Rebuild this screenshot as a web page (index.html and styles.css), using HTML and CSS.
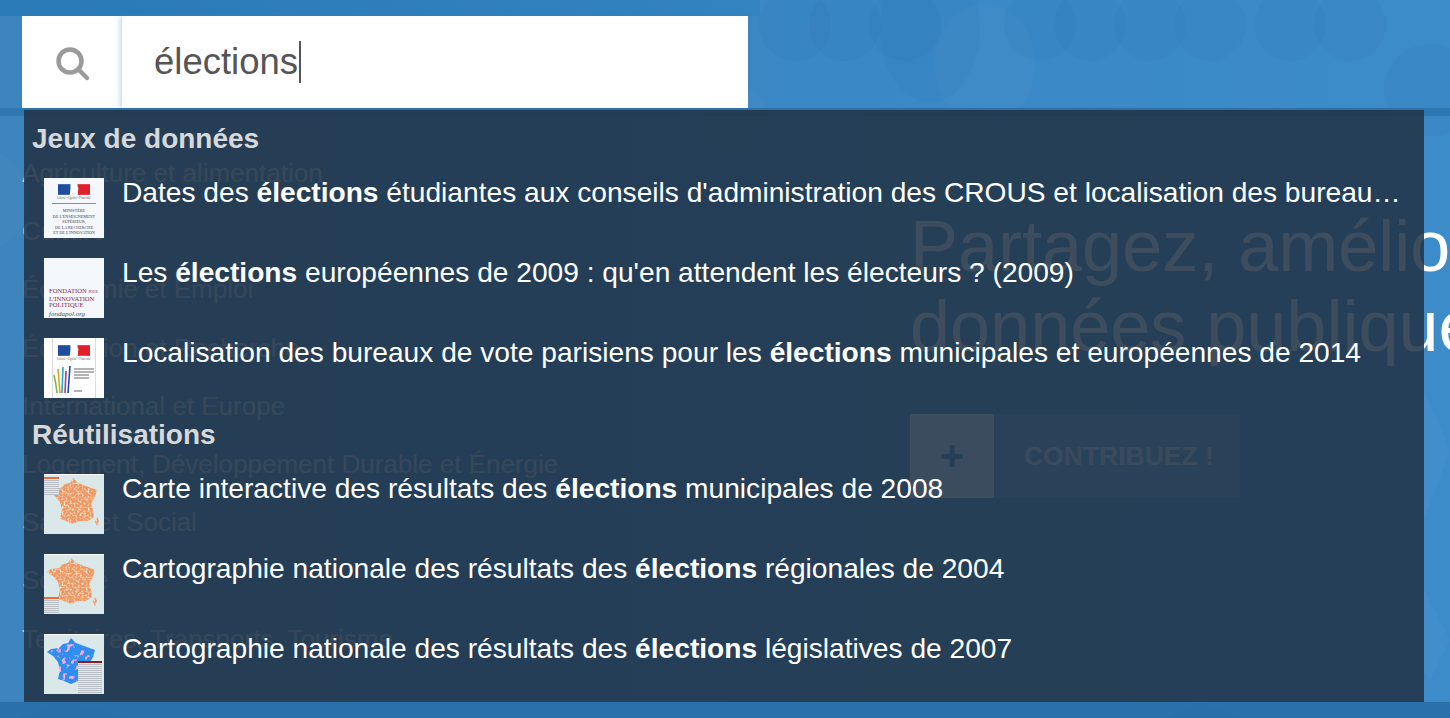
FILE: index.html
```html
<!DOCTYPE html>
<html lang="fr">
<head>
    <meta charset="UTF-8">
    <title>Recherche - élections</title>
    <link rel="stylesheet" href="styles.css">
</head>
<body>
    <!-- page background pattern -->
    <svg class="pattern" width="1450" height="718" viewBox="0 0 1450 718" aria-hidden="true">
        <g fill="#1f5f96" fill-opacity="0.07">
            <circle cx="795" cy="25" r="36"/>
            <circle cx="845" cy="25" r="36"/>
            <circle cx="905" cy="25" r="36"/>
            <ellipse cx="930" cy="30" rx="50" ry="72"/>
            <circle cx="1040" cy="25" r="36"/>
            <circle cx="1090" cy="25" r="36"/>
            <circle cx="1150" cy="25" r="36"/>
            <circle cx="1210" cy="25" r="36"/>
            <circle cx="1290" cy="25" r="36"/>
            <circle cx="1350" cy="25" r="36"/>
            <circle cx="1430" cy="90" r="46"/>
            <path d="M1200 702 L1240 718 H1170 Z"/>
            <path d="M60 702 L130 718 H20 Z"/>
        </g>
        <g fill="#fff" fill-opacity="0.025">
            <ellipse cx="985" cy="65" rx="50" ry="62"/>
            <circle cx="735" cy="120" r="34"/>
            <path d="M1424 390 L1450 450 L1424 520 Z"/>
            <path d="M1424 590 L1450 640 L1430 680 L1424 670 Z"/>
            <circle cx="-20" cy="200" r="50"/>
        </g>
    </svg>

    <!-- shared thumbnails -->
    <svg class="defs" width="0" height="0" aria-hidden="true">
        <filter id="mottle-orange" x="0" y="0" width="100%" height="100%">
            <feTurbulence type="fractalNoise" baseFrequency="0.5" numOctaves="2" seed="4" result="noise"/>
            <feColorMatrix in="noise" type="matrix" values="0 0 0 0 0.99  0 0 0 0 0.9  0 0 0 0 0.7  2 2 0 0 -1.9"/>
            <feComposite in2="SourceGraphic" operator="in" result="spots"/>
            <feMerge>
                <feMergeNode in="SourceGraphic"/>
                <feMergeNode in="spots"/>
            </feMerge>
        </filter>
        <filter id="mottle-pink" x="0" y="0" width="100%" height="100%">
            <feTurbulence type="fractalNoise" baseFrequency="0.22" numOctaves="2" seed="9" result="noise"/>
            <feColorMatrix in="noise" type="matrix" values="0 0 0 0 0.93  0 0 0 0 0.42  0 0 0 0 0.72  5 5 0 0 -5.6"/>
            <feComposite in2="SourceGraphic" operator="in" result="spots"/>
            <feMerge>
                <feMergeNode in="SourceGraphic"/>
                <feMergeNode in="spots"/>
            </feMerge>
        </filter>
        <symbol id="flag" viewBox="0 0 36 12">
            <rect width="36" height="12" fill="#fff"/>
            <rect width="14" height="12" fill="#1f4e9e"/>
            <rect x="22" width="14" height="12" fill="#e2202c"/>
            <path d="M13 12 L15 4 L19 0 L23 4 L22 12 Z" fill="#fff"/>
        </symbol>
        <symbol id="france" viewBox="0 0 60 60">
            <path d="M27 3 L32 8 L40 11 L51 15 L49 22 L45 29 L47 35 L48 42 L42 46 L34 46 L27 49 L20 46 L14 44 L16 35 L14 27 L9 21 L3 17 L7 14 L15 13 L19 9 L24 8 Z"/>
            <path d="M51 42 L53 46 L51 51 L49 47 Z"/>
        </symbol>
    </svg>

    <header class="search">
        <div class="search-icon">
            <svg width="36" height="36" viewBox="0 0 36 36">
                <circle cx="15" cy="15" r="11.5" fill="none" stroke="#9a9a9a" stroke-width="4.5"/>
                <path d="M24 24 L32 32" stroke="#9a9a9a" stroke-width="4.5" stroke-linecap="round"/>
            </svg>
        </div>
        <div class="search-input"><span>élections</span><span class="caret"></span></div>

        <div class="suggest">
            <h4>Jeux de données</h4>
            <div class="item">
                <div class="thumb thumb-gov">
                    <svg class="flag" width="32" height="11"><use href="#flag"/></svg>
                    <div class="gov-caption">Liberté • Égalité • Fraternité</div>
                    <div class="gov-text">MINISTÈRE<br>DE L'ENSEIGNEMENT<br>SUPÉRIEUR,<br>DE LA RECHERCHE<br>ET DE L'INNOVATION</div>
                </div>
                <p>Dates des <b>élections</b> étudiantes aux conseils d'administration des CROUS et localisation des bureau…</p>
            </div>
            <div class="item">
                <div class="thumb thumb-fondapol">
                    <div class="fonda">FONDATION <small>POUR</small><br>L'INNOVATION<br>POLITIQUE</div>
                    <em>fondapol.org</em>
                </div>
                <p>Les <b>élections</b> européennes de 2009 : qu'en attendent les électeurs ? (2009)</p>
            </div>
            <div class="item">
                <div class="thumb thumb-gov thumb-region">
                    <svg class="flag" width="32" height="11"><use href="#flag"/></svg>
                    <div class="gov-caption">Liberté • Égalité • Fraternité</div>
                    <svg class="stripes" width="46" height="30" viewBox="0 0 46 30">
                        <path d="M3 10 Q5 18 6 28" stroke="#7ab648" stroke-width="1.6" fill="none"/>
                        <path d="M7 4 Q8 16 9 28" stroke="#e8a020" stroke-width="1.6" fill="none"/>
                        <path d="M12 2 L11 28" stroke="#2aa7c9" stroke-width="1.6" fill="none"/>
                        <path d="M15 6 L14 28" stroke="#c2307c" stroke-width="1.6" fill="none"/>
                        <path d="M19 1 L17 28" stroke="#1f4e9e" stroke-width="1.6" fill="none"/>
                        <path d="M23 4 H43 M23 7 H43 M23 10 H38 M23 13 H38 M23 26 H31" stroke="#666" stroke-width="1" fill="none"/>
                    </svg>
                </div>
                <p>Localisation des bureaux de vote parisiens pour les <b>élections</b> municipales et européennes de 2014</p>
            </div>

            <h4>Réutilisations</h4>
            <div class="item">
                <div class="thumb thumb-map">
                    <svg class="map-orange map-east" width="60" height="60"><use href="#france"/></svg>
                    <span class="legend legend-top"></span>
                </div>
                <p>Carte interactive des résultats des <b>élections</b> municipales de 2008</p>
            </div>
            <div class="item">
                <div class="thumb thumb-map">
                    <svg class="map-orange" width="60" height="60"><use href="#france"/></svg>
                    <span class="legend legend-bottom"></span>
                </div>
                <p>Cartographie nationale des résultats des <b>élections</b> régionales de 2004</p>
            </div>
            <div class="item">
                <div class="thumb thumb-map">
                    <svg class="map-blue" width="60" height="60"><use href="#france"/></svg>
                    <span class="legend legend-right"></span>
                </div>
                <p>Cartographie nationale des résultats des <b>élections</b> législatives de 2007</p>
            </div>
        </div>
    </header>

    <main class="content">
        <ul class="topics">
            <li>Agriculture et alimentation</li>
            <li>Culture</li>
            <li>Économie et Emploi</li>
            <li>Éducation et Recherche</li>
            <li>International et Europe</li>
            <li>Logement, Développement Durable et Énergie</li>
            <li>Santé et Social</li>
            <li>Société</li>
            <li>Territoires, Transports, Tourisme</li>
        </ul>
        <section class="hero">
            <h1>Partagez, améliorez<br>données publiques</h1>
            <a class="contribute">
                <span class="plus">+</span>
                <span class="label">CONTRIBUEZ !</span>
            </a>
        </section>
    </main>
</body>
</html>
```

FILE: styles.css
```css
html, body {
    height: 100%;
}
body {
    margin: 0;
    position: relative;
    width: 1450px;
    height: 718px;
    overflow: hidden;
    font-family: 'Liberation Sans', Arial, sans-serif;
    color: #fff;
    background:
        linear-gradient(90deg, #2b7ab8, #3383bf) 0 0 / 760px 16px no-repeat,
        linear-gradient(#2e78b4, #2e78b4) 0 108px / 100% 8px no-repeat,
        linear-gradient(#2a70a9, #2a70a9) 0 702px / 100% 16px no-repeat,
        linear-gradient(90deg, #3d85bc, #3a88c6 60%, #3d8cca);
}
.pattern {
    position: absolute;
    top: 0;
    left: 0;
}
.defs {
    position: absolute;
}

/* search bar */
.search {
    position: relative;
    z-index: 2;
    display: flex;
    width: 726px;
    height: 92px;
    margin: 16px 0 0 22px;
}
.search-icon {
    width: 100px;
    display: flex;
    align-items: center;
    justify-content: center;
    background: #fff;
    padding: 4px 0 0 2px;
    box-sizing: border-box;
}
.search-input {
    flex: 1;
    display: flex;
    align-items: center;
    padding-left: 32px;
    background: #fff;
    box-shadow: -2px 0 5px rgba(60, 130, 200, 0.3);
    font-size: 36.5px;
    color: #555;
}
.caret {
    width: 2px;
    height: 42px;
    margin-left: 1px;
    background: #555;
}

/* dropdown */
.suggest {
    position: absolute;
    top: 92px;
    left: 2px;
    width: 1400px;
    box-sizing: border-box;
    padding: 2px 0 0 20px;
    border-top: 2px solid #2d70a6;
    background: rgba(34, 52, 72, 0.88);
}
.suggest h4 {
    margin: 0 0 0 -12px;
    height: 56px;
    line-height: 54px;
    font-size: 28px;
    font-weight: bold;
    color: #d6d8da;
}
.item {
    display: flex;
    gap: 18px;
    height: 60px;
    padding: 10px 0;
}
.item:last-child {
    padding-bottom: 8px;
}
.item p {
    margin: 0;
    font-size: 28.15px;
    line-height: 30px;
    color: #fff;
    white-space: nowrap;
}
.item b {
    font-weight: bold;
}

/* thumbnails */
.thumb {
    position: relative;
    flex: none;
    width: 60px;
    height: 60px;
    overflow: hidden;
    box-sizing: border-box;
    background: #f4f7fb;
    color: #444;
    font-family: 'Liberation Serif', serif;
}
.thumb-gov {
    display: flex;
    flex-direction: column;
    align-items: center;
    padding-top: 6px;
}
.flag {
    flex: none;
}
.gov-caption {
    margin-top: 1px;
    font-size: 3px;
    line-height: 4px;
    white-space: nowrap;
    color: #666;
}
.gov-text {
    width: 44px;
    margin-top: 3px;
    padding-top: 4px;
    border-top: 1px solid #8a8f96;
    font-size: 4.2px;
    line-height: 5.6px;
    text-align: center;
    white-space: nowrap;
}
.thumb-region {
    padding-top: 7px;
    background: #fff;
    box-shadow: inset 8px 0 0 #fff, inset 9px 0 0 #ddd, inset -8px 0 0 #fff, inset -9px 0 0 #ddd;
}
.stripes {
    flex: none;
    margin-top: 4px;
}
.thumb-fondapol {
    padding: 30px 0 0 5px;
    color: #8a2a4a;
}
.fonda {
    font-size: 6.6px;
    line-height: 6.5px;
    white-space: nowrap;
}
.fonda small {
    font-size: 3.5px;
}
.thumb-fondapol em {
    display: block;
    margin-top: 1px;
    font-size: 7px;
    color: #555;
}
.thumb-map {
    background: #dbe8ea;
    border-top: 1px solid #fff;
}
.map-orange {
    display: block;
    fill: #ef9560;
    filter: url(#mottle-orange);
}
.map-east {
    transform: translateX(2px);
}
.map-blue {
    display: block;
    fill: #2f8ff0;
    filter: url(#mottle-pink);
}
.legend {
    position: absolute;
    background: repeating-linear-gradient(#e6e8e8 0 1px, #b9bfc4 1px 2px);
}
.legend-top {
    top: 2px;
    left: 0;
    width: 15px;
    height: 16px;
    border-top: 2px solid #f06a3a;
}
.legend-bottom {
    bottom: 0;
    left: 0;
    width: 15px;
    height: 15px;
    border-top: 2px solid #f06a3a;
}
.legend-right {
    top: 26px;
    right: 2px;
    width: 24px;
    height: 30px;
    border-top: 2px solid #8e1c28;
}

/* page under the dropdown */
.content {
    display: flex;
    position: relative;
}
.topics {
    width: 910px;
    flex: none;
    box-sizing: border-box;
    margin: 36px 0 0;
    padding: 0 0 0 22px;
    list-style: none;
    font-size: 26px;
    line-height: 58.2px;
    white-space: nowrap;
    color: #c9ced4;
}
.hero {
    flex: none;
    padding-top: 98px;
}
.hero h1 {
    margin: 0 0 48px;
    font-size: 72px;
    font-weight: normal;
    line-height: 80px;
    white-space: nowrap;
}
.contribute {
    display: flex;
    width: 330px;
    height: 84px;
    background: rgba(255, 255, 255, 0.2);
}
.plus {
    width: 84px;
    display: flex;
    align-items: center;
    justify-content: center;
    background: rgba(255, 255, 255, 0.9);
    color: #3a8ac4;
    font-size: 42px;
    font-weight: bold;
}
.label {
    display: flex;
    align-items: center;
    padding-left: 30px;
    color: #dbe6f0;
    font-size: 26.5px;
    font-weight: bold;
}
```
